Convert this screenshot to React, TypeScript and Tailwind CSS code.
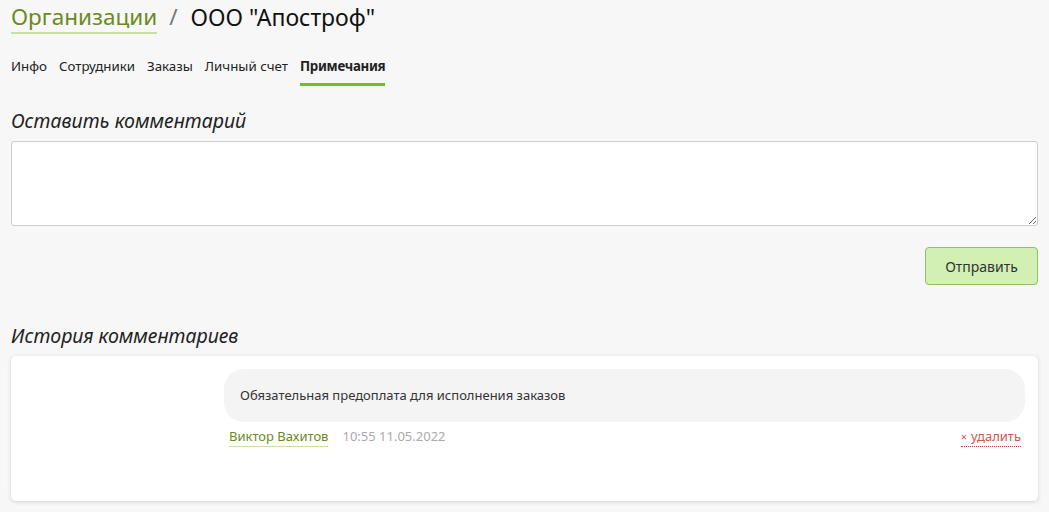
import React from "react";

export default function App() {
  return (
    <div
      className="min-h-[512px] w-full bg-[#f7f7f7] px-[11px] text-[#222]"
      style={{ fontFamily: '"Noto Sans", "Open Sans", sans-serif' }}
    >
      <div className="flex items-end pt-[3px] text-[22.5px] leading-[28px]">
        <a className="border-b-2 border-[#c5e0a0] pb-[1px] text-[#6b8a22]">Организации</a>
        <span className="ml-[12px] mr-[13px] pb-[3px] text-[#777]">/</span>
        <span className="pb-[3px] text-[23px] text-[#111]">ООО "Апостроф"</span>
      </div>

      <div className="mt-[23px] flex gap-[12px] text-[13.3px] leading-[18px]">
        <span className="pb-[11px]">Инфо</span>
        <span className="pb-[11px]">Сотрудники</span>
        <span className="pb-[11px]">Заказы</span>
        <span className="pb-[11px]">Личный счет</span>
        <span className="border-b-[3px] border-[#6cbf2a] pb-[8px] font-bold tracking-[-0.3px]">Примечания</span>
      </div>

      <div className="mt-[23px] text-[19.5px] italic leading-[24px] text-[#222]">Оставить комментарий</div>
      <textarea className="mt-[8px] block h-[85px] w-full rounded-[3px] border border-[#cccccc] bg-white" />

      <div className="mt-[21px] flex justify-end">
        <button className="h-[38px] w-[113px] rounded-[4px] border border-[#90c060] bg-[#d2efb4] text-[14px] text-[#333]">
          Отправить
        </button>
      </div>

      <div className="mt-[39px] text-[19.5px] italic leading-[24px] text-[#222]">История комментариев</div>
      <div className="mt-[8px] h-[145px] rounded-[5px] bg-white pl-[213px] pr-[13px] pt-[13px] shadow-[0_1px_4px_rgba(0,0,0,0.15)]">
        <div className="flex h-[53px] items-center rounded-[20px] bg-[#f4f4f4] px-[16px] text-[13px] text-[#333]">
          Обязательная предоплата для исполнения заказов
        </div>
        <div className="mt-[5px] flex items-start px-[5px] text-[13px] leading-[18px]">
          <span className="border-b border-[#c5e0a0] pb-[1px] text-[#6b8a22]">Виктор Вахитов</span>
          <span className="ml-[14px] text-[#aaa]">10:55 11.05.2022</span>
          <span className="ml-auto mr-[-1px] border-b border-dotted border-[#e0303a] text-[#d9534f]">
            <span className="mr-[4px] text-[11px]">×</span>удалить
          </span>
        </div>
      </div>
    </div>
  );
}
